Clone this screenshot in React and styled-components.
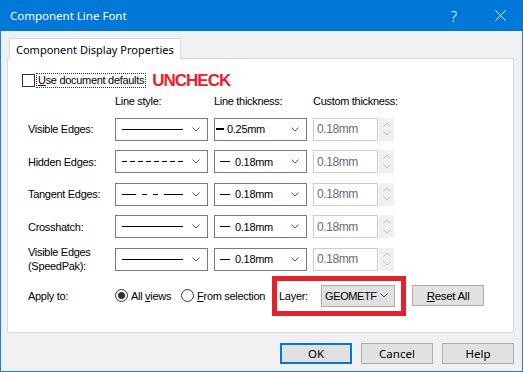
import React from "react";
import styled, { createGlobalStyle } from "styled-components";

const GlobalStyle = createGlobalStyle`
  body {
    margin: 0;
    background: #f0f0f0;
  }
`;

const DIALOG_FONT = `"Liberation Sans", Arial, sans-serif`;
const UI_FONT = `"Noto Sans", "Open Sans", sans-serif`;

const Window = styled.div`
  width: 523px;
  height: 372px;
  box-sizing: border-box;
  border: 1px solid #1883d7;
  border-top: none;
  background: #f0f0f0;
  display: flex;
  flex-direction: column;
  font-family: ${DIALOG_FONT};
  font-size: 11px;
  letter-spacing: -0.3px;
  color: #000;
`;

const TitleBar = styled.div`
  height: 31px;
  margin: 0 -1px;
  background: #0078d7;
  color: #fff;
  display: flex;
  align-items: center;
  font-family: ${UI_FONT};
  font-size: 11.5px;
  letter-spacing: 0;
`;

const Title = styled.div`
  flex: 1;
  padding-left: 10px;
`;

const CaptionButton = styled.div`
  width: 46px;
  height: 31px;
  display: flex;
  align-items: center;
  justify-content: center;
  font-size: 15px;
  font-weight: 300;
`;

const Body = styled.div`
  flex: 1;
  display: flex;
  flex-direction: column;
  padding: 7px 8px 0 6px;
`;

const TabStrip = styled.div`
  display: flex;
  height: 20px;
  padding-left: 2px;
`;

const Tab = styled.div`
  position: relative;
  z-index: 1;
  height: 21px;
  box-sizing: border-box;
  padding: 0 6px;
  display: flex;
  align-items: center;
  background: #fff;
  border: 1px solid #d9d9d9;
  border-bottom: none;
  font-family: ${UI_FONT};
  font-size: 11px;
  letter-spacing: 0;
`;

const Panel = styled.div`
  height: 275px;
  box-sizing: border-box;
  background: #fff;
  border: 1px solid #d9d9d9;
  padding: 14px 0 0 14px;
  display: flex;
  flex-direction: column;
`;

const CheckRow = styled.div`
  display: flex;
  align-items: center;
  height: 15px;
`;

const CheckBox = styled.div`
  width: 13px;
  height: 13px;
  box-sizing: border-box;
  border: 1px solid #333;
  background: #fff;
`;

const FocusLabel = styled.span`
  margin-left: 2px;
  padding: 0 1px;
  line-height: 13px;
  outline: 1px dotted #333;
`;

const Callout = styled.span`
  margin-left: 7px;
  color: #e8212b;
  font-weight: bold;
  font-size: 17px;
  letter-spacing: -1px;
  line-height: 15px;
`;

const Grid = styled.div`
  margin: 5px 0 0 6px;
  display: grid;
  grid-template-columns: 81px 93px 93px auto;
  grid-auto-rows: 23px;
  grid-template-rows: 15px;
  column-gap: 6px;
  row-gap: 9.5px;
`;

const Header = styled.div`
  align-self: center;
`;

const RowLabel = styled.div`
  align-self: center;
  line-height: 14px;
`;

const Combo = styled.div`
  box-sizing: border-box;
  height: 23px;
  border: 1px solid #7a7a7a;
  background: #fff;
  display: flex;
  align-items: center;
  padding: 0 7px 0 ${({ $pad }) => $pad ?? 6}px;
`;

const ComboValue = styled.div`
  flex: 1;
  display: flex;
  align-items: center;
`;

const ThicknessMark = styled.span`
  display: inline-block;
  width: ${({ $w }) => $w}px;
  height: ${({ $h }) => $h}px;
  background: #000;
  margin-right: ${({ $gap }) => $gap}px;
`;

const CustomCell = styled.div`
  display: flex;
  height: 23px;
`;

const DisabledInput = styled.div`
  box-sizing: border-box;
  width: 65px;
  height: 23px;
  border: 1px solid #cccccc;
  background: #fff;
  color: #6d6d6d;
  display: flex;
  align-items: center;
  padding-left: 3px;
  font-size: 12px;
  letter-spacing: -0.4px;
`;

const Spinner = styled.div`
  width: 15px;
  margin-left: 1px;
  background: #f0f0f0;
  display: flex;
  flex-direction: column;
  align-items: center;
  justify-content: space-around;
  padding: 2px 0;
  box-sizing: border-box;
`;

const ApplyRow = styled.div`
  margin: 5px 0 0 6px;
  display: flex;
  align-items: center;
`;

const ApplyLabel = styled.div`
  width: 87px;
`;

const RadioGroup = styled.div`
  display: flex;
  align-items: center;
  gap: 10px;
`;

const RadioItem = styled.label`
  display: flex;
  align-items: center;
  gap: 3px;
`;

const RadioDot = styled.span`
  width: 13px;
  height: 13px;
  box-sizing: border-box;
  border: 1px solid #333;
  border-radius: 50%;
  background: #fff;
  display: flex;
  align-items: center;
  justify-content: center;
  &::after {
    content: "";
    width: 7px;
    height: 7px;
    border-radius: 50%;
    background: ${({ $checked }) => ($checked ? "#333" : "transparent")};
  }
`;

const LayerBox = styled.div`
  margin-left: 7px;
  height: 40px;
  box-sizing: border-box;
  border: 5px solid #e3222b;
  display: flex;
  align-items: center;
  padding: 0 6px 0 2px;
`;

const LayerLabel = styled.span`
  width: 42px;
`;

const DropList = styled.div`
  box-sizing: border-box;
  width: 74px;
  height: 22px;
  border: 1px solid #adadad;
  background: #e1e1e1;
  display: flex;
  align-items: center;
  justify-content: space-between;
  padding: 0 6px 0 3px;
  font-size: 11px;
  letter-spacing: -0.4px;
  overflow: hidden;
`;

const Button = styled.div`
  box-sizing: border-box;
  width: 72px;
  height: 21px;
  border: ${({ $default }) => ($default ? "2px solid #0078d7" : "1px solid #adadad")};
  background: #e1e1e1;
  display: flex;
  align-items: center;
  justify-content: center;
  font-family: ${({ $ui }) => ($ui ? UI_FONT : DIALOG_FONT)};
  font-size: 11.5px;
  letter-spacing: ${({ $ui }) => ($ui ? 0 : -0.3)}px;
`;

const ResetButton = styled(Button)`
  margin-left: 6px;
`;

const Footer = styled.div`
  margin-top: 10px;
  display: flex;
  justify-content: flex-end;
  gap: 9px;
`;

const Chevron = ({ color = "#555" }) => (
  <svg width="8" height="5" viewBox="0 0 8 5">
    <polyline points="0.5,0.5 4,4 7.5,0.5" fill="none" stroke={color} strokeWidth="1" />
  </svg>
);

const SpinArrow = ({ up }) => (
  <svg width="8" height="5" viewBox="0 0 8 5">
    <polyline
      points={up ? "0.5,4.5 4,1 7.5,4.5" : "0.5,0.5 4,4 7.5,0.5"}
      fill="none"
      stroke="#bfbfbf"
      strokeWidth="1"
    />
  </svg>
);

const LinePreview = ({ dash }) => (
  <svg width="61" height="3" viewBox="0 0 61 3">
    <line x1="0" y1="1.5" x2="61" y2="1.5" stroke="#000" strokeWidth="1" strokeDasharray={dash} />
  </svg>
);

const rows = [
  { label: "Visible Edges:", dash: undefined, thickness: "0.25mm", bold: true },
  { label: "Hidden Edges:", dash: "5 3", thickness: "0.18mm" },
  { label: "Tangent Edges:", dash: "14 6 5 6 5 6 19", thickness: "0.18mm" },
  { label: "Crosshatch:", dash: undefined, thickness: "0.18mm" },
  { label: ["Visible Edges", "(SpeedPak):"], dash: undefined, thickness: "0.18mm" },
];

export default function App() {
  return (
    <>
      <GlobalStyle />
      <Window>
        <TitleBar>
          <Title>Component Line Font</Title>
          <CaptionButton>?</CaptionButton>
          <CaptionButton>
            <svg width="11" height="11" viewBox="0 0 11 11">
              <path d="M0.5 0.5 L10.5 10.5 M10.5 0.5 L0.5 10.5" stroke="#fff" strokeWidth="1" />
            </svg>
          </CaptionButton>
        </TitleBar>
        <Body>
          <TabStrip>
            <Tab>Component Display Properties</Tab>
          </TabStrip>
          <Panel>
            <CheckRow>
              <CheckBox />
              <FocusLabel>
                <u>U</u>se document defaults
              </FocusLabel>
              <Callout>UNCHECK</Callout>
            </CheckRow>
            <Grid>
              <div />
              <Header>Line style:</Header>
              <Header>Line thickness:</Header>
              <Header>Custom thickness:</Header>
              {rows.map((row, i) => (
                <React.Fragment key={i}>
                  <RowLabel>
                    {Array.isArray(row.label) ? (
                      <>
                        {row.label[0]}
                        <br />
                        {row.label[1]}
                      </>
                    ) : (
                      row.label
                    )}
                  </RowLabel>
                  <Combo>
                    <ComboValue>
                      <LinePreview dash={row.dash} />
                    </ComboValue>
                    <Chevron />
                  </Combo>
                  <Combo $pad={row.bold ? 1 : 5}>
                    <ComboValue>
                      {row.bold ? (
                        <ThicknessMark $w={8} $h={2} $gap={3} />
                      ) : (
                        <ThicknessMark $w={10} $h={1} $gap={5} />
                      )}
                      {row.thickness}
                    </ComboValue>
                    <Chevron />
                  </Combo>
                  <CustomCell>
                    <DisabledInput>0.18mm</DisabledInput>
                    <Spinner>
                      <SpinArrow up />
                      <SpinArrow />
                    </Spinner>
                  </CustomCell>
                </React.Fragment>
              ))}
            </Grid>
            <ApplyRow>
              <ApplyLabel>Apply to:</ApplyLabel>
              <RadioGroup>
                <RadioItem>
                  <RadioDot $checked />
                  <span>
                    All <u>v</u>iews
                  </span>
                </RadioItem>
                <RadioItem>
                  <RadioDot />
                  <span>
                    <u>F</u>rom selection
                  </span>
                </RadioItem>
              </RadioGroup>
              <LayerBox>
                <LayerLabel>Layer:</LayerLabel>
                <DropList>
                  GEOMETF
                  <Chevron color="#444" />
                </DropList>
              </LayerBox>
              <ResetButton>
                <span>
                  <u>R</u>eset All
                </span>
              </ResetButton>
            </ApplyRow>
          </Panel>
          <Footer>
            <Button $ui $default>OK</Button>
            <Button $ui>Cancel</Button>
            <Button $ui>Help</Button>
          </Footer>
        </Body>
      </Window>
    </>
  );
}
